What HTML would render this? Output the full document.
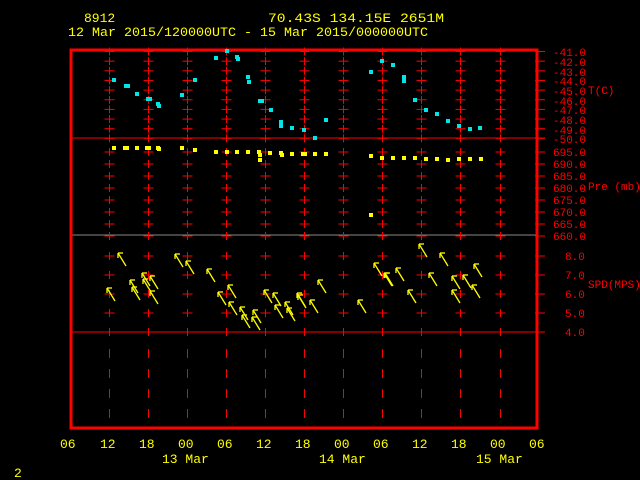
<!DOCTYPE html>
<html><head><meta charset="utf-8"><style>
html,body{margin:0;padding:0;background:#000;width:640px;height:480px;overflow:hidden}
svg{display:block}
text{font-family:"Liberation Mono",monospace}
</style></head><body>
<svg id="s" width="640" height="480" viewBox="0 0 640 480">
<g fill="#ffff00" font-size="13">
<text x="84" y="22">8912</text>
<text x="268" y="22" textLength="176" lengthAdjust="spacingAndGlyphs">70.43S  134.15E  2651M</text>
<text x="68" y="36" textLength="360" lengthAdjust="spacingAndGlyphs">12 Mar 2015/120000UTC - 15 Mar 2015/000000UTC</text>
<text x="60" y="448">06</text><text x="100" y="448">12</text><text x="139" y="448">18</text><text x="178" y="448">00</text>
<text x="217" y="448">06</text><text x="256" y="448">12</text><text x="295" y="448">18</text><text x="334" y="448">00</text>
<text x="373" y="448">06</text><text x="412" y="448">12</text><text x="451" y="448">18</text><text x="490" y="448">00</text><text x="529" y="448">06</text>
<text x="162" y="463">13 Mar</text><text x="319" y="463">14 Mar</text><text x="476" y="463">15 Mar</text>
<text x="14" y="477">2</text>
</g>
<g fill="#ff0000" font-size="11">
<text x="553" y="56">-41.0</text><text x="553" y="66">-42.0</text><text x="553" y="76">-43.0</text><text x="553" y="85">-44.0</text>
<text x="553" y="95">-45.0</text><text x="553" y="105">-46.0</text><text x="553" y="114">-47.0</text><text x="553" y="124">-48.0</text>
<text x="553" y="134">-49.0</text><text x="553" y="143">-50.0</text>
<text x="553" y="156">695.0</text><text x="553" y="168">690.0</text><text x="553" y="180">685.0</text><text x="553" y="192">680.0</text>
<text x="553" y="204">675.0</text><text x="553" y="216">670.0</text><text x="553" y="228">665.0</text><text x="553" y="240">660.0</text>
<text x="565" y="260">8.0</text><text x="565" y="279">7.0</text><text x="565" y="298">6.0</text><text x="565" y="317">5.0</text><text x="565" y="336">4.0</text>
<text x="588" y="94">T(C)</text><text x="588" y="190">Pre (mb)</text><text x="588" y="288">SPD(MPS)</text>
</g>
<g id="g" stroke="#ff0000" stroke-width="1" fill="none"></g>
<rect x="71" y="50" width="466" height="378" fill="none" stroke="#ff0000" stroke-width="3"/>
<g id="p"></g>
</svg>
<script>
var g=document.getElementById('g'),p=document.getElementById('p'),NS='http://www.w3.org/2000/svg';
function L(x1,y1,x2,y2,c,w,par){var e=document.createElementNS(NS,'line');e.setAttribute('x1',x1);e.setAttribute('y1',y1);e.setAttribute('x2',x2);e.setAttribute('y2',y2);e.setAttribute('stroke',c||'#f00');e.setAttribute('stroke-width',w||1);(par||g).appendChild(e);}
function R(x,y,c){var e=document.createElementNS(NS,'rect');e.setAttribute('x',x-2);e.setAttribute('y',y-2);e.setAttribute('width',4);e.setAttribute('height',4);e.setAttribute('fill',c);p.appendChild(e);}
L(72,138,545,138);L(72,235,538,235,'#888');L(72,332,545,332);
var xs=[];for(var k=0;k<11;k++)xs.push(Math.round(108.5+39.1*k)+0.5);
var ty=[],py=[],sy=[];for(var i=0;i<10;i++)ty.push(51.5+9.65*i);
for(i=0;i<8;i++)py.push(152+12*i);for(i=0;i<5;i++)sy.push(256+19*i);
var all=ty.concat(py,sy);
xs.forEach(function(x){
 all.forEach(function(y){L(x-5,y,x+5,y);L(x,y-4,x,y+4);});
 [349,369,389,409].forEach(function(y){L(x,y,x,y+9);});
 L(x,329,x,336);
});
all.forEach(function(y){L(535,y,545,y);});
[[114,80],[126,86],[128,86],[137,94],[148,99],[150,99],[158,104],[159,106],[182,95],[195,80],[216,58],[227,51],[237,57],[238,59],[248,77],[249,82],[260,101],[262,101],[271,110],[281,122],[281,126],[292,128],[304,130],[315,138],[326,120],[371,72],[382,61],[393,65],[404,77],[404,81],[415,100],[426,110],[437,114],[448,121],[459,126],[470,129],[480,128]].forEach(function(a){R(a[0],a[1],'#00e5e5');});
[[114,148],[125,148],[127,148],[137,148],[147,148],[149,148],[158,148],[159,149],[182,148],[195,150],[216,152],[227,152],[237,152],[248,152],[259,152],[260,155],[260,160],[270,153],[281,153],[282,155],[292,154],[303,154],[305,154],[315,154],[326,154],[371,156],[382,158],[393,158],[404,158],[415,158],[426,159],[437,159],[448,160],[459,159],[470,159],[481,159],[371,215]].forEach(function(a){R(a[0],a[1],'#ffff00');});
var ar=[[118,253],[175,254],[186,261],[207,269],[142,273],[150,276],[130,280],[143,279],[107,288],[132,287],[150,291],[228,285],[218,292],[264,290],[273,293],[297,293],[298,295],[318,280],[229,302],[240,307],[253,310],[242,315],[252,317],[275,305],[285,302],[287,308],[310,300],[358,300],[374,263],[384,273],[419,244],[440,253],[474,264],[396,268],[385,273],[429,273],[452,276],[463,275],[472,285],[408,290],[452,290]];
ar.forEach(function(a){var x=a[0],y=a[1];L(x,y,x+8,y+13,'#ffff00',1.3,p);L(x,y,x+5,y,'#ffff00',1.3,p);L(x,y,x,y+5,'#ffff00',1.3,p);});
</script>
</body></html>
